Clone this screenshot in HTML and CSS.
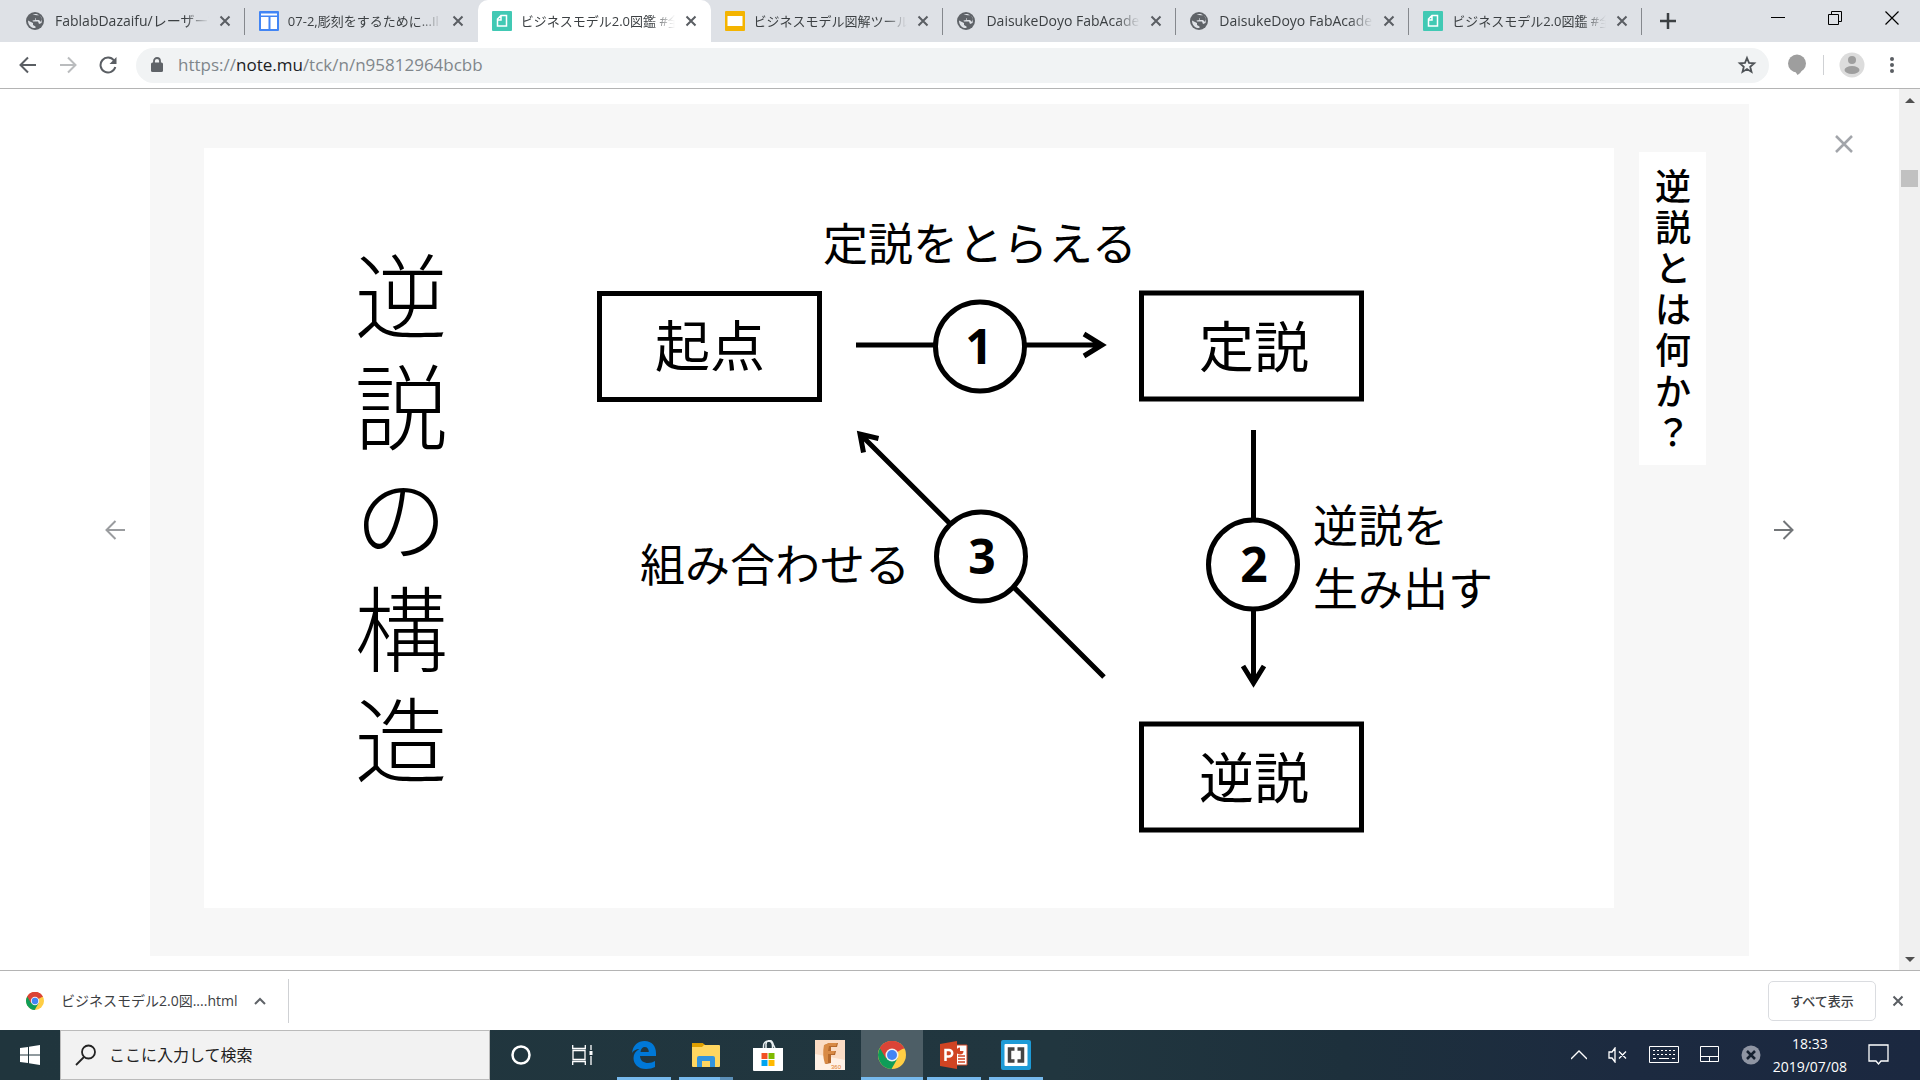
FILE: index.html
```html
<!DOCTYPE html>
<html lang="ja">
<head>
<meta charset="utf-8">
<title>ビジネスモデル2.0図鑑</title>
<link rel="stylesheet" href="styles.css">
</head>
<body>
<svg class="defs" aria-hidden="true">
  <symbol id="close" viewBox="0 0 12 12"><path d="M1.5 1.5l9 9M10.500 1.500l-9 9" fill="none" stroke="currentColor" stroke-width="2"/></symbol>
  <symbol id="globe" viewBox="0 0 18 18"><circle cx="9" cy="9" r="9" fill="#5f6368"/><path d="M2 8.500L7 11v2l2.500 1.500V16C5 16.500 2 13 2 8.500zM6.500 2.500C9 1.500 12 2 13.500 3.500L11.500 6 9 6.500 9.500 8l-3 .5.5 1h5l1 2.500L15.500 11c1-3 .5-5-1-7" fill="#dee1e6"/><path d="M10 4l4-1 2 4-1 3-2-2-3 0z" fill="#5f6368"/></symbol>
  <symbol id="note" viewBox="0 0 20 20"><rect width="20" height="20" rx="1" fill="#41c9b4"/><path d="M9 4.500h5.500v10.500h-9V8zM9 5v4H6" fill="none" stroke="#fff" stroke-width="1.500"/></symbol>
  <symbol id="chrome" viewBox="0 0 28 28"><circle cx="14" cy="14" r="14" fill="#ffce44"/><path d="M14 14L1.900 7A14 14 0 0 1 26.100 7z" fill="#db4437"/><path d="M1.900 7A14 14 0 0 0 13.500 28L19.500 17.500 14 14z" fill="#0f9d58"/><path d="M14 7.500h12.400A14 14 0 0 0 1.900 7l6 10.400z" fill="#db4437"/><circle cx="14" cy="14" r="6.500" fill="#f1f1f1"/><circle cx="14" cy="14" r="5" fill="#4285f4"/></symbol>
</svg>
<header class="tabstrip">
  <nav class="tabs">
    <div class="tab"><svg class="fav globe"><use href="#globe"/></svg><a class="tab-title" href="#">FablabDazaifu/レーザーで</a><button class="tab-close" aria-label="閉じる"><svg><use href="#close"/></svg></button></div>
    <div class="tab no-sep"><svg class="fav" viewBox="0 0 20 20"><rect width="20" height="20" rx="1" fill="#4285f4"/><path d="M2 2.500h16v2H2zM2 6h7.500v12H2zM11.500 6H18v12h-6.500z" fill="#fff"/></svg><a class="tab-title cjk" href="#">07-2,彫刻をするために...Il</a><button class="tab-close" aria-label="閉じる"><svg><use href="#close"/></svg></button></div>
    <div class="tab active no-sep"><svg class="fav"><use href="#note"/></svg><a class="tab-title cjk" href="#">ビジネスモデル2.0図鑑 #全</a><button class="tab-close" aria-label="閉じる"><svg><use href="#close"/></svg></button></div>
    <div class="tab"><svg class="fav" viewBox="0 0 20 20"><rect width="20" height="20" rx="1" fill="#f4b400"/><rect x="2.500" y="5" width="15" height="10" fill="#fff"/></svg><a class="tab-title cjk" href="#">ビジネスモデル図解ツールキ</a><button class="tab-close" aria-label="閉じる"><svg><use href="#close"/></svg></button></div>
    <div class="tab"><svg class="fav globe"><use href="#globe"/></svg><a class="tab-title" href="#">DaisukeDoyo FabAcade</a><button class="tab-close" aria-label="閉じる"><svg><use href="#close"/></svg></button></div>
    <div class="tab"><svg class="fav globe"><use href="#globe"/></svg><a class="tab-title" href="#">DaisukeDoyo FabAcade</a><button class="tab-close" aria-label="閉じる"><svg><use href="#close"/></svg></button></div>
    <div class="tab"><svg class="fav"><use href="#note"/></svg><a class="tab-title cjk" href="#">ビジネスモデル2.0図鑑 #全</a><button class="tab-close" aria-label="閉じる"><svg><use href="#close"/></svg></button></div>
  </nav>
  <button class="new-tab" aria-label="新しいタブ"><svg width="16" height="16"><path d="M8 0v16M0 8h16" stroke="#3c4043" stroke-width="2.500"/></svg></button>
  <div class="window-controls">
    <button aria-label="最小化"><svg width="14" height="14"><path d="M0 6.500h14" stroke="#000"/></svg></button>
    <button aria-label="元に戻す"><svg width="14" height="14" fill="none" stroke="#000"><path d="M.5 3.500h10v10H.5zM3.500 3V.5h10v10H11"/></svg></button>
    <button aria-label="閉じる"><svg width="14" height="14"><path d="M.5 .5l13 13M13.500 .5l-13 13" stroke="#000" stroke-width="1.200"/></svg></button>
  </div>
</header>
<div class="toolbar">
  <button class="nav-btn" aria-label="戻る"><svg width="18" height="18" fill="none" stroke="#5a5e63" stroke-width="2"><path d="M17 9H2M9 1.500L1.500 9 9 16.500"/></svg></button>
  <button class="nav-btn" aria-label="進む"><svg width="18" height="18" fill="none" stroke="#babcbe" stroke-width="2"><path d="M1 9h15M9 1.500L16.500 9 9 16.500"/></svg></button>
  <button class="nav-btn" aria-label="再読み込み"><svg width="18" height="18"><path d="M15 4.500A7.500 7.500 0 1 0 16.300 11" fill="none" stroke="#5a5e63" stroke-width="2"/><path d="M17.500 1v7h-7z" fill="#5a5e63"/></svg></button>
  <div class="omnibox">
    <svg width="12" height="16"><rect y="5.500" width="12" height="9.500" rx="1.500" fill="#5f6368"/><path d="M3 6V4a3 3 0 0 1 6 0v2" fill="none" stroke="#5f6368" stroke-width="1.800"/></svg>
    <span class="url">https://<b>note.mu</b>/tck/n/n95812964bcbb</span>
    <button aria-label="ブックマーク"><svg width="20" height="20"><path d="M10 3l2 4.900 5.200.4-4 3.400 1.300 5.200-4.500-2.800-4.500 2.800 1.300-5.200-4-3.400L8 7.900z" fill="none" stroke="#4f5357" stroke-width="1.800"/></svg></button>
  </div>
  <div class="extensions">
    <svg width="18" height="22"><circle cx="9" cy="9.500" r="9" fill="#9e9e9e"/><path d="M7 17l7-1q-1 3-4.500 5z" fill="#9e9e9e"/></svg>
    <span class="tool-sep"></span>
    <svg width="26" height="26"><circle cx="13" cy="13" r="12.500" fill="#dcdcdc"/><circle cx="13" cy="8" r="4" fill="#9e9e9e"/><ellipse cx="13" cy="18" rx="7.500" ry="4" fill="#9e9e9e"/></svg>
    <svg class="menu-dots" width="4" height="18" fill="#5a5e63"><circle cx="2" cy="3" r="2"/><circle cx="2" cy="9" r="2"/><circle cx="2" cy="15" r="2"/></svg>
  </div>
</div>
<main class="viewport">
  <div class="lightbox">
    <button class="prev" aria-label="前へ"><svg width="20" height="20" fill="none" stroke="#9a9c9f" stroke-width="2"><path d="M20 10H2M10.500 1L1.500 10l9 9"/></svg></button>
    <figure class="sheet">
      <svg class="slide" viewBox="0 0 1410 760">
        <g class="title">
          <text x="197" y="184">逆</text><text x="197" y="295">説</text><text x="197" y="406">の</text><text x="197" y="517">構</text><text x="197" y="628">造</text>
        </g>
        <g class="strokes">
          <rect x="395.500" y="145.500" width="220" height="106"/>
          <rect x="937.500" y="145" width="220" height="106"/>
          <rect x="937.500" y="576" width="220" height="106"/>
          <path d="M652 197H897M880 186l18 11-18 11"/>
          <path d="M1049.500 282V534M1039 518l10.500 17 10.500-17"/>
          <path d="M900 529L656 286M674.500 290.500L656 286l3.500 18.500"/>
          <circle cx="776" cy="198.500" r="44.500"/>
          <circle cx="1049" cy="416.500" r="44.500"/>
          <circle cx="777" cy="408.500" r="44.500"/>
        </g>
        <g class="node"><text x="506" y="218">起点</text><text x="1050" y="219">定説</text><text x="1050" y="650">逆説</text></g>
        <g class="num"><text x="775" y="216">1</text><text x="1050" y="434">2</text><text x="778" y="426">3</text></g>
        <g class="caption"><text x="619" y="113">定説をとらえる</text><text x="1109" y="395">逆説を</text><text x="1109" y="458">生み出す</text><text x="436" y="434">組み合わせる</text></g>
      </svg>
      <figcaption class="heading">逆説とは何か？</figcaption>
    </figure>
    <div class="side">
      <button class="dismiss" aria-label="閉じる"><svg width="20" height="20" fill="none" stroke="#a2a5aa" stroke-width="2.500"><path d="M2 2l16 16M18 2L2 18"/></svg></button>
      <button class="next" aria-label="次へ"><svg width="20" height="20" fill="none" stroke="#727578" stroke-width="2"><path d="M0 10h18M9.500 1l9 9-9 9"/></svg></button>
    </div>
  </div>
  <div class="scrollbar">
    <svg width="10" height="6" fill="#505050"><path d="M0 6L5 1l5 5z"/></svg>
    <span class="thumb"></span>
    <svg width="10" height="6" fill="#505050"><path d="M0 0l5 5 5-5z"/></svg>
  </div>
</main>
<section class="downloads">
  <button class="file"><svg width="18" height="18"><use href="#chrome"/></svg><span>ビジネスモデル2.0図....html</span><svg width="12" height="8"><path d="M1 7l5-5 5 5" fill="none" stroke="#5f6368" stroke-width="2"/></svg></button>
  <span class="file-sep"></span>
  <button class="show-all">すべて表示</button>
  <button class="shelf-close" aria-label="閉じる"><svg width="12" height="12"><use href="#close"/></svg></button>
</section>
<footer class="taskbar">
  <button class="start" aria-label="スタート"><svg width="20" height="20" fill="#fff"><path d="M0 3l8-1v7.500H0zM9 1.800L20 0v9.500H9zM0 10.500h8V18l-8-1zM9 10.500h11V20L9 18.200z"/></svg></button>
  <label class="search"><svg width="22" height="22" fill="none" stroke="#222" stroke-width="1.800"><circle cx="13.500" cy="8" r="6.500"/><path d="M9 13L1 21"/></svg><input type="text" aria-label="検索" placeholder="ここに入力して検索"></label>
  <button class="app cortana" aria-label="Cortana"><svg width="20" height="20"><circle cx="10" cy="10" r="8.500" fill="none" stroke="#fff" stroke-width="2.500"/></svg></button>
  <button class="app" aria-label="タスクビュー"><svg width="21" height="20" fill="none" stroke="#fff" stroke-width="1.300"><path d="M1 5.500h12v9H1zM.7 0v3.500h12.600V0M.7 20v-3.500h12.600V20M19 0v5M19 11v9"/><path d="M19 6v4" stroke-width="3"/></svg></button>
  <button class="app open" aria-label="Edge"><svg width="26" height="28"><path d="M1 12C2 4 7 0 13.500 0 21 0 25 5.500 25 12v3H9c.3 5 4 7 8 7 3 0 5-.7 7-2v6c-2.500 1.300-5 2-9 2C7 28 2.500 23 2.500 17c0-4 2-7 6-9C5 8 2 10 1 12zM9.500 11h8.300c0-3-1.500-5-4-5s-4 2-4.300 5z" fill="#0078d7"/></svg></button>
  <button class="app open stacked" aria-label="エクスプローラー"><svg width="28" height="24"><path d="M0 0h11l2 3H0z" fill="#d99a00"/><rect y="2" width="28" height="22" rx="1" fill="#ffd660"/><path d="M0 4h10l3-3H0z" fill="#dfa000"/><path d="M5 24V15q0-2 2-2h14q2 0 2 2v9h-5v-6h-8v6z" fill="#3394dd"/></svg></button>
  <button class="app" aria-label="ストア"><svg width="30" height="31"><path d="M0 8h30v22q0 1-1 1H1q-1 0-1-1z" fill="#fff"/><path d="M10.500 8V6a4.500 5 0 0 1 9 0v2M13 8V5a3.500 4 0 0 1 7-1l2 4" fill="none" stroke="#e8eef0" stroke-width="1.500"/><path d="M8.500 13h6v6h-6z" fill="#f25022"/><path d="M15.500 13h6v6h-6z" fill="#7fba00"/><path d="M8.500 20h6v6h-6z" fill="#00a4ef"/><path d="M15.500 20h6v6h-6z" fill="#ffb900"/></svg></button>
  <button class="app" aria-label="Fusion 360"><svg width="30" height="30"><path d="M0 0h30v30H0z" fill="#fbdcc4"/><path d="M0 14L30 20v10H0z" fill="#fff1e5"/><path d="M10 5l4-2h9l-1 4h-6v4h5l-1 4h-4v8l-5 1q-3-9-1-19z" fill="#b5692c"/><path d="M14 3h8l-1 3h-7l-1 5h7l-1 3h-6v9l-3 1q-3-9-1-19z" fill="#d88a45"/><text x="16" y="29" font-family="Liberation Sans, sans-serif" font-size="6" fill="#e07b2a">360</text></svg></button>
  <button class="app open current" aria-label="Chrome"><svg width="28" height="28"><use href="#chrome"/></svg></button>
  <button class="app open" aria-label="PowerPoint"><svg width="28" height="28"><path d="M14 4h13v20H14z" fill="#fff" stroke="#d04423"/><path d="M18 15h7M18 18h7M18 21h7" stroke="#d04423" stroke-width="1.500"/><circle cx="20" cy="10" r="3.500" fill="#d04423"/><path d="M20 10V6h4v4z" fill="#fff"/><path d="M0 3l17-3v28L0 25z" fill="#d04423"/><path d="M5.500 20V9H9a3.200 3.200 0 0 1 0 6.500H6" fill="none" stroke="#fff" stroke-width="2.500"/></svg></button>
  <button class="app open" aria-label="Brackets"><svg width="30" height="30"><rect width="30" height="30" rx="2" fill="#1e9bd7"/><rect x="3.500" y="4" width="23" height="22" rx="1" fill="#fff"/><path d="M13.500 9H8.500v12h5M16.500 9h5v12h-5" fill="none" stroke="#444" stroke-width="3.500"/></svg></button>
  <div class="tray">
    <svg width="16" height="10" fill="none" stroke="#fff" stroke-width="1.300"><path d="M0 9l8-8 8 8"/></svg>
    <svg width="20" height="16" fill="none" stroke="#fff" stroke-width="1.300"><path d="M1 5h3l3-4v14l-3-4H1zM11 4.500l7 7M18 4.500l-7 7"/></svg>
    <svg width="30" height="18" fill="none" stroke="#fff"><path d="M.5.5h29v16H.5z"/><path d="M4 4.500h22M4 8.500h22" stroke-dasharray="2 2"/><path d="M4 12.500h3M10 12.500h10M23 12.500h3"/></svg>
    <svg width="20" height="18" fill="none" stroke="#fff"><path d="M.5.5h18v15H.5zM.5 10.500h18M9.500 10.500v5"/></svg>
    <svg width="20" height="20"><circle cx="10" cy="10" r="9.500" fill="#8f95a3"/><path d="M6 6l8 8M14 6l-8 8" stroke="#15202f" stroke-width="2.500"/></svg>
    <time class="clock">18:33<br>2019/07/08</time>
    <svg width="22" height="22" fill="none" stroke="#fff" stroke-width="1.300"><path d="M1 1h19v16h-7l-2.500 3L8 17H1z"/></svg>
  </div>
</footer>
</body>
</html>
```
FILE: styles.css
```css
* { box-sizing: border-box; }
html, body { height: 100%; }
body {
  margin: 0;
  display: flex;
  flex-direction: column;
  overflow: hidden;
  background: #fff;
  color: #3c4043;
  font: 14px/20px "Open Sans", "Noto Sans CJK JP", sans-serif;
}
button { margin: 0; padding: 0; border: 0; background: none; font: inherit; color: inherit; display: flex; align-items: center; justify-content: center; }
svg { display: block; flex: none; }
a { color: inherit; text-decoration: none; }
.defs { position: absolute; width: 0; height: 0; }

.tabstrip { display: flex; flex: none; height: 42px; padding-left: 12px; background: #dee1e6; }
.tabs { display: flex; flex: 0 1 1630px; min-width: 0; }
.tab { display: flex; flex: 1 1 0; min-width: 0; align-items: center; padding: 0 13px 0 14px; border-right: 1px solid transparent; border-image: linear-gradient(transparent 9px, #85888d 9px, #85888d 34px, transparent 34px) 1; border-width: 0 1px 0 0; }
.tab.no-sep { border-image: none; border-right: 1px solid transparent; }
.tab.active { background: #fff; border-radius: 10px 10px 0 0; }
.fav { width: 20px; height: 20px; margin-right: 9px; }
.fav.globe { width: 18px; height: 18px; margin-right: 11px; }
.tab-title { flex: 1; min-width: 0; overflow: hidden; white-space: nowrap; -webkit-mask-image: linear-gradient(to left, transparent, #000 24px); mask-image: linear-gradient(to left, transparent, #000 24px); }
.tab-title.cjk { font-size: 13px; }
.tab-close { width: 12px; height: 12px; margin-left: 10px; color: #5a5e63; }
.tab-close svg { width: 12px; height: 12px; }
.new-tab { width: 52px; }
.window-controls { display: flex; margin-left: auto; height: 36px; }
.window-controls button { width: 57px; }

.toolbar { display: flex; flex: none; align-items: center; height: 47px; padding-left: 8px; border-bottom: 1px solid #b4b4b4; }
.nav-btn { width: 40px; height: 36px; }
.omnibox { display: flex; flex: 1; align-items: center; height: 35px; margin-left: 8px; padding: 0 12px 0 15px; border-radius: 18px; background: #f1f3f4; }
.url { flex: 1; margin-left: 15px; font-size: 17px; color: #80868b; }
.url b { font-weight: 400; color: #202124; }
.extensions { display: flex; align-items: center; width: 151px; padding-left: 19px; }
.tool-sep { width: 1px; height: 20px; margin: 0 15px 0 17px; background: #cfd1d4; }
.menu-dots { margin-left: 25px; }

.viewport { display: flex; flex: 1; min-height: 0; }
.lightbox { display: grid; flex: 1; grid-template-columns: 150px 1fr 150px; padding: 15px 0 14px; }
.prev { align-self: center; justify-self: end; width: 70px; height: 40px; }
.sheet { display: flex; align-items: flex-start; gap: 25px; margin: 0; padding: 44px 43px 0 54px; background: #f7f7f7; }
.slide { flex: 1; min-width: 0; background: #fff; font-family: "Noto Sans CJK JP", sans-serif; }
.title { font-size: 93px; font-weight: 200; text-anchor: middle; }
.strokes { fill: #fff; stroke: #000; stroke-width: 5; }
.strokes path { fill: none; }
.node { font-size: 55px; text-anchor: middle; }
.num { font: 700 48px "Open Sans", sans-serif; text-anchor: middle; }
.caption { font-size: 45px; }
.heading { width: 67px; margin-top: 4px; padding: 12px 15px 14px 16px; background: #fff; color: #000; font: 500 36px/41px "Noto Sans CJK JP", sans-serif; word-break: break-all; line-break: anywhere; }
.side { display: grid; grid-template-rows: 1fr auto 1fr; }
.dismiss { width: 40px; height: 40px; margin: 20px 35px 0 auto; align-self: start; }
.next { width: 70px; height: 40px; }
.scrollbar { display: flex; flex-direction: column; align-items: center; width: 21px; padding: 8px 0 7px; background: #f0f0f0; }
.thumb { width: 17px; height: 17px; margin: 67px 0 auto; background: #c1c1c1; }

.downloads { display: flex; flex: none; align-items: center; height: 60px; padding-right: 16px; border-top: 1px solid #b4b4b4; }
.file { gap: 17px; padding: 0 22px 0 26px; }
.file-sep { width: 1px; height: 44px; background: #cfd1d4; }
.show-all { width: 108px; height: 40px; margin: 0 16px 0 auto; border: 1px solid #dadce0; border-radius: 5px; font-size: 13px; font-weight: 500; }
.shelf-close { color: #5a5e63; }

.taskbar { display: flex; flex: none; height: 50px; background: linear-gradient(90deg, #20353d, #21363f 55%, #1d303c 70%, #1c2a40 85%, #1b2840); color: #fff; }
.start { width: 60px; }
.search { display: flex; flex: 0 1 430px; align-items: center; gap: 12px; padding: 0 14px; border: 1px solid #bbb; background: #f2f2f2; }
.search input { flex: 1; min-width: 0; border: 0; padding: 0; background: none; font: 16px/24px "Open Sans", "Noto Sans CJK JP", sans-serif; }
.search input::placeholder { color: #222; opacity: 1; }
.app { width: 62px; border-bottom: 3px solid transparent; border-top: 3px solid transparent; }
.cortana { width: 61px; }
.app.open { border-image: linear-gradient(90deg, transparent 5px, #76b9ed 5px, #76b9ed 57px, transparent 57px) 1; border-width: 0 0 3px; padding-top: 3px; }
.app.stacked { border-image: linear-gradient(90deg, transparent 5px, #76b9ed 5px, #76b9ed 45px, #5b8fb8 45px, #5b8fb8 57px, transparent 57px) 1; }
.app.current { background: #4d5e66; border-image: linear-gradient(#76b9ed, #76b9ed) 1; }
.tray { display: flex; align-items: center; margin-left: auto; padding-right: 30px; gap: 21px; }
.clock { margin: 0 0 0 -9px; text-align: center; font: 14px/23px "Open Sans", sans-serif; }
```
